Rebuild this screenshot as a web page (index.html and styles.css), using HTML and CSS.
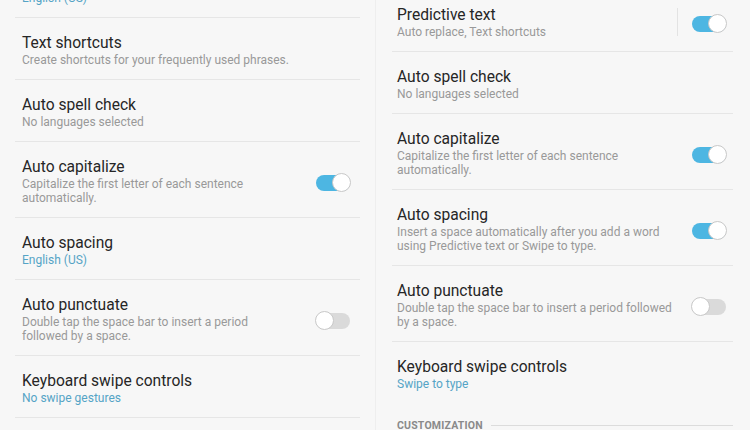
FILE: index.html
```html
<!DOCTYPE html>
<html lang="en">
  <head>
    <meta charset="UTF-8" />
    <meta name="viewport" content="width=device-width, initial-scale=1.0" />
    <title>Keyboard settings</title>
    <link rel="stylesheet" href="styles.css">
  </head>
  <body>
    <div class="screens">
      <div class="pane pane-left">
        <ul class="list list-left">
          <li class="row">
            <div class="text">
              <div class="title">Languages and types</div>
              <div class="sub sub-blue">English (US)</div>
            </div>
          </li>
          <li class="row">
            <div class="text">
              <div class="title">Text shortcuts</div>
              <div class="sub">Create shortcuts for your frequently used phrases.</div>
            </div>
          </li>
          <li class="row">
            <div class="text">
              <div class="title">Auto spell check</div>
              <div class="sub">No languages selected</div>
            </div>
          </li>
          <li class="row">
            <div class="text">
              <div class="title">Auto capitalize</div>
              <div class="sub">Capitalize the first letter of each sentence<br>automatically.</div>
            </div>
            <span class="switch on"></span>
          </li>
          <li class="row">
            <div class="text">
              <div class="title">Auto spacing</div>
              <div class="sub sub-blue">English (US)</div>
            </div>
          </li>
          <li class="row">
            <div class="text">
              <div class="title">Auto punctuate</div>
              <div class="sub">Double tap the space bar to insert a period<br>followed by a space.</div>
            </div>
            <span class="switch"></span>
          </li>
          <li class="row">
            <div class="text">
              <div class="title">Keyboard swipe controls</div>
              <div class="sub sub-blue">No swipe gestures</div>
            </div>
          </li>
        </ul>
      </div>

      <div class="pane pane-right">
        <ul class="list list-right">
          <li class="row">
            <div class="text">
              <div class="title">Predictive text</div>
              <div class="sub">Auto replace, Text shortcuts</div>
            </div>
            <span class="split"></span>
            <span class="switch on"></span>
          </li>
          <li class="row">
            <div class="text">
              <div class="title">Auto spell check</div>
              <div class="sub">No languages selected</div>
            </div>
          </li>
          <li class="row">
            <div class="text">
              <div class="title">Auto capitalize</div>
              <div class="sub">Capitalize the first letter of each sentence<br>automatically.</div>
            </div>
            <span class="switch on"></span>
          </li>
          <li class="row">
            <div class="text">
              <div class="title">Auto spacing</div>
              <div class="sub">Insert a space automatically after you add a word<br>using Predictive text or Swipe to type.</div>
            </div>
            <span class="switch on"></span>
          </li>
          <li class="row">
            <div class="text">
              <div class="title">Auto punctuate</div>
              <div class="sub">Double tap the space bar to insert a period followed<br>by a space.</div>
            </div>
            <span class="switch"></span>
          </li>
          <li class="row row-last">
            <div class="text">
              <div class="title">Keyboard swipe controls</div>
              <div class="sub sub-blue">Swipe to type</div>
            </div>
          </li>
        </ul>
        <div class="category">
          <span>CUSTOMIZATION</span>
          <span class="rule"></span>
        </div>
      </div>
    </div>
  </body>
</html>
```

FILE: styles.css
```css
body {
  margin: 0;
  background: #f7f7f7;
  font-family: Roboto, "Liberation Sans", sans-serif;
  color: #222;
  overflow: hidden;
}
.screens {
  display: grid;
  grid-template-columns: 375px 375px;
  height: 430px;
  overflow: hidden;
}
.pane-right {
  border-left: 1px solid #eeeeee;
}
.list {
  list-style: none;
  margin: 0;
  padding: 0;
}
.list-left {
  margin: -44px 15px 0 15px;
}
.list-right {
  margin: -10px 17px 0 16px;
}
.row {
  display: flex;
  align-items: center;
  padding: 15px 10px 12px 7px;
  border-bottom: 1px solid #e6e6e6;
}
.list-right .row {
  padding-left: 5px;
  padding-right: 7px;
}
.row-last {
  border-bottom: none;
}
.text {
  flex: 1;
}
.title {
  font-size: 15.6px;
  line-height: 20px;
  color: #262626;
}
.sub {
  font-size: 12px;
  line-height: 14px;
  color: #999999;
}
.sub-blue {
  color: #55a4c6;
}
.switch {
  position: relative;
  width: 34px;
  height: 16px;
  margin-top: 3px;
  border-radius: 8px;
  background: #dadada;
  flex-shrink: 0;
}
.switch::after {
  content: "";
  position: absolute;
  top: -2px;
  left: -1px;
  width: 19px;
  height: 19px;
  border-radius: 50%;
  background: #fff;
  border: 1px solid #c8c8c8;
  box-sizing: border-box;
}
.switch.on {
  background: #4db6e2;
}
.switch.on::after {
  left: auto;
  right: -1px;
}
.split {
  width: 1px;
  height: 28px;
  background: #e3e3e3;
  margin-right: 14px;
}
.category {
  display: flex;
  align-items: center;
  margin: 16px 17px 0 21px;
  font-size: 10.5px;
  font-weight: bold;
  color: #8a8a8a;
  letter-spacing: 0.2px;
}
.category .rule {
  flex: 1;
  height: 1px;
  background: #dcdcdc;
  margin-left: 8px;
}
```
